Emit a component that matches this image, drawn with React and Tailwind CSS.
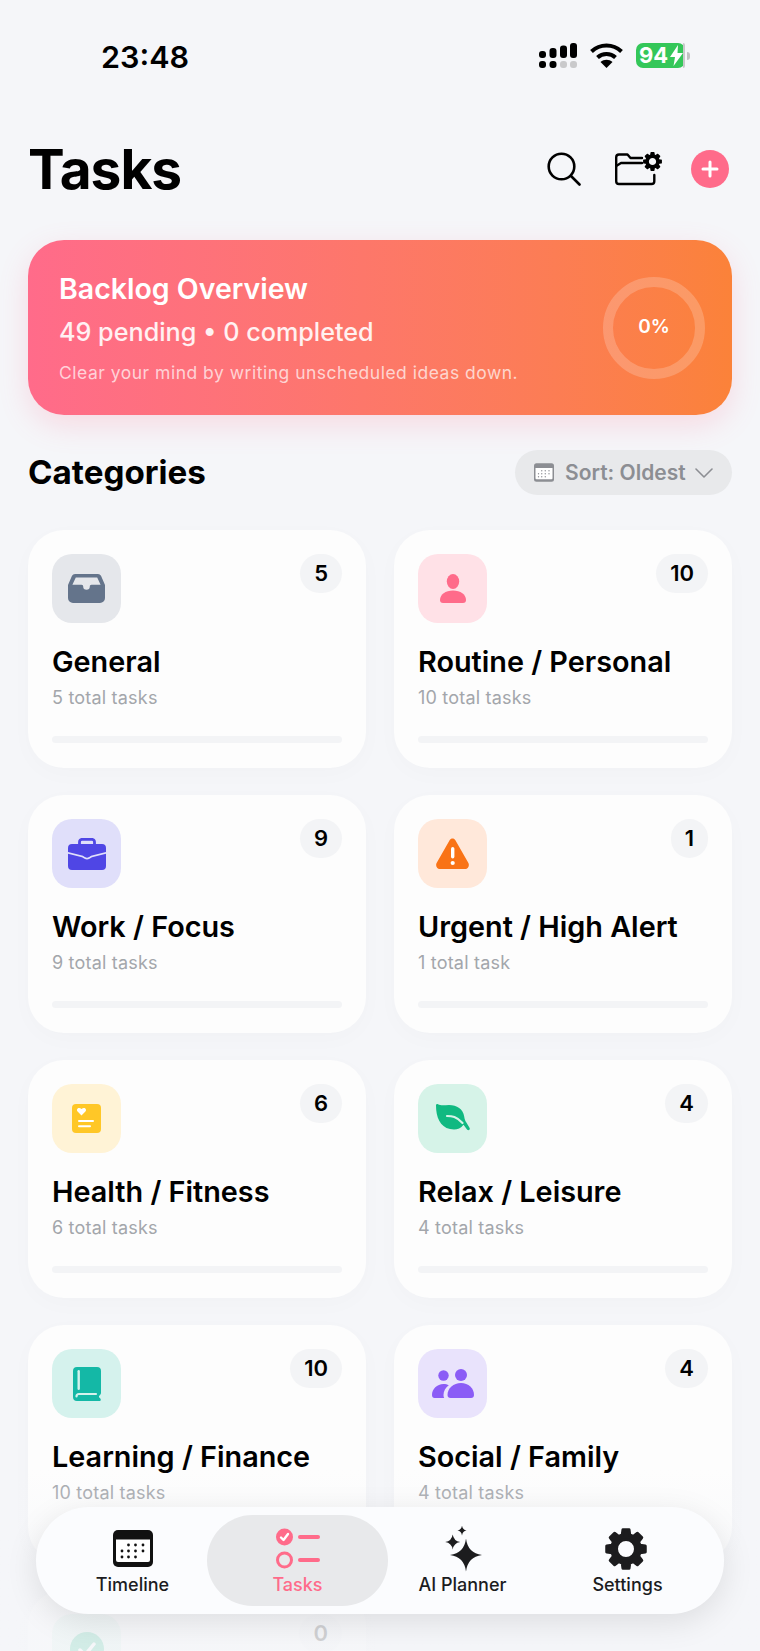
const InboxIcon = () => (
  <svg width="37" height="29" viewBox="0 0 37 29">
    <path fillRule="evenodd" fill="#64748b" d="M7 0H30a3.5 3.5 0 0 1 3 1.8L37 11V24a5 5 0 0 1-5 5H5a5 5 0 0 1-5-5V11L4 1.8A3.5 3.5 0 0 1 7 0ZM7.8 3.4 4.4 10.800H13.500c1.200 0 1.700.7 1.700 1.700a3.300 3.300 0 0 0 6.600 0c0-1 .5-1.700 1.700-1.700H32.600L29.200 3.400Z" />
  </svg>
);

const PersonIcon = () => (
  <svg width="26" height="29" viewBox="0 0 26 29">
    <ellipse cx="13" cy="7.5" rx="6.2" ry="7.5" fill="#ff6b8a" />
    <path fill="#ff6b8a" d="M0 26c0-5.500 5.500-9.500 13-9.500S26 20.500 26 26c0 2-1 3-3 3H3c-2 0-3-1-3-3Z" />
  </svg>
);

const BriefcaseIcon = () => (
  <svg width="38" height="32" viewBox="0 0 38 32">
    <path fill="none" stroke="#4f46e5" strokeWidth="2.800" d="M11.500 7V4a2.700 2.700 0 0 1 2.700-2.700h9.600A2.700 2.700 0 0 1 26.500 4V7" />
    <path fill="#4f46e5" d="M4 6h30a4 4 0 0 1 4 4v4L24 17.500c-1.500.4-2 1-3 1.600-1.200.7-2.800.7-4 0-1-.6-1.500-1.200-3-1.600L0 14V10a4 4 0 0 1 4-4Z" />
    <path fill="#4f46e5" d="M0 15.800 14 19.300c1 .3 1.500.9 2.500 1.500 1.500.9 3.500.9 5 0 1-.6 1.500-1.200 2.500-1.500L38 15.800V28a4 4 0 0 1-4 4H4a4 4 0 0 1-4-4Z" />
  </svg>
);

const WarningIcon = () => (
  <svg width="33" height="31" viewBox="0 0 33 31">
    <path fill="#f97316" d="M13.600 2.200c1.300-2.300 4.500-2.300 5.800 0l13 22.800c1.300 2.500-.3 6-3 6H3.600c-2.700 0-4.300-3.500-3-6Z" />
    <rect x="15" y="9" width="3.400" height="11.500" rx="1.700" fill="#fff" />
    <circle cx="16.700" cy="25" r="2.100" fill="#fff" />
  </svg>
);

const HealthIcon = () => (
  <svg width="29" height="29" viewBox="0 0 29 29">
    <rect width="29" height="29" rx="4" fill="#ffc727" />
    <path fill="#fff" d="M9.500 11.500 5.600 7.600c-1.900-2.200.9-5 3.900-2.600 3-2.400 5.800.4 3.900 2.600Z" />
    <rect x="6" y="16" width="16" height="2" rx="1" fill="#fff" />
    <rect x="6" y="21.200" width="13" height="2" rx="1" fill="#fff" />
  </svg>
);

const LeafIcon = () => (
  <svg width="34" height="29" viewBox="0 0 34 29">
    <path fill="#10b981" d="M0 1.500C0 .3 1-.3 2 .3 5 2 9 1 13 1c8 0 14 4 15.200 11.500.3 2.500 1 4.500 2 5.800l3.300 5.500c1.200 2-1.200 3.400-2.500 1.700l-3.500-4.800C24 25.500 19 26 14 25 4 23 0 13 0 1.500Z" />
    <path fill="none" stroke="#d6f3e8" strokeWidth="2.200" strokeLinecap="round" d="M11 12c5 0 9.500 .5 15.500 7" />
  </svg>
);

const BookIcon = () => (
  <svg width="28" height="34" viewBox="0 0 28 34">
    <path fill="#14b8a6" d="M4 0h20a4 4 0 0 1 4 4v22c0 1.200-1 1.800-1.500 2.400-.8 1-.8 1.700 0 2.400l1 1c.6.800.2 2.200-1.200 2.200H4a4 4 0 0 1-4-4V4a4 4 0 0 1 4-4Z" />
    <rect x="4.500" y="3" width="2.400" height="20" rx="1.200" fill="#d5f2ed" />
    <path fill="none" stroke="#d5f2ed" strokeWidth="2.200" strokeLinecap="round" d="M23 27H6a2.500 2.500 0 0 0-2.500 2.500" />
  </svg>
);

const PeopleIcon = () => (
  <svg width="42" height="29" viewBox="0 0 42 29">
    <circle cx="11.500" cy="6.500" r="5.200" fill="#8b5cf6" />
    <circle cx="29" cy="6" r="6" fill="#8b5cf6" />
    <path fill="#8b5cf6" d="M0 26c0-6 5-11 11.500-11 2 0 3.800.5 5.300 1.200C13.500 18.500 11.500 22 11.500 26c0 1.200.2 2.200.7 3H2.500C1 29 0 27.800 0 26Z" />
    <path fill="#8b5cf6" d="M15.500 26c0-7 6-12 13.500-12s13 5 13 12c0 1.800-1.200 3-3 3H18.500c-1.800 0-3-1.200-3-3Z" />
  </svg>
);

const CheckIcon = () => (
  <svg width="34" height="34" viewBox="0 0 34 34">
    <circle cx="17" cy="17" r="17" fill="#10b981" />
    <path fill="none" stroke="#fff" strokeWidth="3.500" strokeLinecap="round" strokeLinejoin="round" d="M10 18l5 5 9-11" />
  </svg>
);

const calendarDots = [
  [15.5, 15], [22.5, 15], [30, 15],
  [9, 21], [15.5, 21], [22.5, 21], [30, 21],
  [9, 27], [15.5, 27], [22.5, 27],
];

const CalendarIcon = ({ className, dark }) => (
  <svg className={className} viewBox="0 0 40 37">
    <rect width="40" height="37" rx="5" fill={dark} />
    <path fill="#fff" d="M3 9.500H37V30a2 2 0 0 1-2 2H5a2 2 0 0 1-2-2Z" />
    {calendarDots.map(([x, y]) => (
      <circle key={`${x}-${y}`} cx={x} cy={y} r="1.400" fill={dark} />
    ))}
  </svg>
);

const ChecklistIcon = () => (
  <svg width="44" height="42" viewBox="0 0 44 42">
    <circle cx="8.500" cy="9" r="8.500" fill="#ff6b8a" />
    <path fill="none" stroke="#fff" strokeWidth="2.400" strokeLinecap="round" strokeLinejoin="round" d="M5 9.500l2.500 2.500L12 6" />
    <rect x="22" y="7" width="22" height="4" rx="2" fill="#ff6b8a" />
    <circle cx="8.500" cy="32" r="7" fill="none" stroke="#ff6b8a" strokeWidth="3" />
    <rect x="22" y="30" width="22" height="4" rx="2" fill="#ff6b8a" />
  </svg>
);

const star = (cx, cy, rx, ry, k) =>
  `M${cx} ${cy - ry}Q${cx + k} ${cy - k} ${cx + rx} ${cy}Q${cx + k} ${cy + k} ${cx} ${cy + ry}Q${cx - k} ${cy + k} ${cx - rx} ${cy}Q${cx - k} ${cy - k} ${cx} ${cy - ry}Z`;

const SparklesIcon = () => (
  <svg width="38" height="46" viewBox="0 0 38 46">
    <path fill="#1c1c1e" d={star(22, 29, 16, 16.500, 1.800)} />
    <path fill="#1c1c1e" d={star(8.700, 16, 7.500, 7.500, 1)} />
    <path fill="#1c1c1e" d={star(18, 4.500, 4.500, 5, 0.600)} />
  </svg>
);

// eight round teeth around a hole, the stroke rounds off the corners
const gearPath = () => {
  const pt = (deg, r) => {
    const a = ((deg - 90) * Math.PI) / 180;
    return `${(21 + r * Math.cos(a)).toFixed(2)} ${(21 + r * Math.sin(a)).toFixed(2)}`;
  };
  const pts = [];
  for (let i = 0; i < 8; i++) {
    const a = i * 45;
    pts.push(pt(a - 15, 14.5), pt(a - 9, 19.5), pt(a + 9, 19.5), pt(a + 15, 14.5));
  }
  return `M${pts.join('L')}ZM30.500 21a9.500 9.500 0 1 0-19 0a9.500 9.500 0 1 0 19 0Z`;
};

const GearIcon = ({ size, className }) => (
  <svg width={size} height={size} viewBox="0 0 42 42" className={className}>
    <path d={gearPath()} fill="currentColor" fillRule="evenodd" stroke="currentColor" strokeWidth="3" strokeLinejoin="round" />
  </svg>
);

const SearchIcon = () => (
  <svg width="34" height="34" viewBox="0 0 34 34" fill="none" stroke="#000" strokeWidth="2.600" strokeLinecap="round">
    <circle cx="14.500" cy="14.500" r="12.800" />
    <path d="M24 24l8.500 8.500" />
  </svg>
);

const FolderGearIcon = () => (
  <div className="relative w-[47px] h-[34px]">
    <svg width="47" height="34" viewBox="0 0 47 34" fill="none" stroke="#000" strokeWidth="2.400" strokeLinecap="round" strokeLinejoin="round">
      <path d="M27 6H15.500L12.500 2.500H4a2.800 2.800 0 0 0-2.800 2.800V29.200A2.800 2.800 0 0 0 4 32H36.500a2.800 2.800 0 0 0 2.800-2.800V23" />
      <path d="M2 13.500 6 11H27" />
    </svg>
    <GearIcon size={19} className="absolute right-0 top-0 text-black" />
  </div>
);

const SignalIcon = () => (
  <svg width="38" height="25" viewBox="0 0 38 25">
    <rect x="0" y="8" width="7" height="7" rx="3" fill="#000" />
    <rect x="10.500" y="5" width="7" height="10" rx="3" fill="#000" />
    <rect x="21" y="2.500" width="7" height="12.500" rx="3" fill="#000" />
    <rect x="31" y="0" width="7" height="15" rx="3" fill="#000" />
    <rect x="0" y="18" width="7" height="7" rx="3" fill="#000" />
    <rect x="10.500" y="18" width="7" height="7" rx="3" fill="#000" />
    <rect x="21" y="18" width="7" height="7" rx="3" fill="#c9c9cb" />
    <rect x="31" y="18" width="7" height="7" rx="3" fill="#c9c9cb" />
  </svg>
);

const WifiIcon = () => (
  <svg width="33" height="25" viewBox="0 0 33 25" fill="none" stroke="#000" strokeWidth="4">
    <path d="M1.500 8.500C10 .5 23 .5 31.500 8.500" />
    <path d="M7.500 14.500C12.500 9.800 20.500 9.800 25.500 14.500" />
    <path fill="#000" stroke="none" d="M10.500 19c3.500-3 8.500-3 12 0l-6 6Z" />
  </svg>
);

const Battery = () => (
  <div className="flex items-center gap-[2px]">
    <div className="relative w-[49px] h-[25px] rounded-[7px] bg-[#34c759] flex items-center pl-[3px]">
      <span className="text-white text-[22px] font-bold leading-[25px]">94</span>
      <svg width="13" height="21" viewBox="0 0 13 21" className="ml-[2px]">
        <path fill="#fff" d="M8 0 0 12h5l-1.500 9L13 8H7.500Z" />
      </svg>
      <div className="absolute right-0 top-0 bottom-0 w-[2px] rounded-r-[7px] bg-[#c9c9cb]" />
    </div>
    <div className="w-[3px] h-[8px] rounded-r-full bg-[#c0c0c2]" />
  </div>
);

const categories = [
  { name: 'General', count: 5, sub: '5 total tasks', bg: 'bg-[#e5e7eb]', icon: <InboxIcon /> },
  { name: 'Routine / Personal', count: 10, sub: '10 total tasks', bg: 'bg-[#ffe1e7]', icon: <PersonIcon /> },
  { name: 'Work / Focus', count: 9, sub: '9 total tasks', bg: 'bg-[#e0dffa]', icon: <BriefcaseIcon /> },
  { name: 'Urgent / High Alert', count: 1, sub: '1 total task', bg: 'bg-[#ffe8da]', icon: <WarningIcon /> },
  { name: 'Health / Fitness', count: 6, sub: '6 total tasks', bg: 'bg-[#fff3d6]', icon: <HealthIcon /> },
  { name: 'Relax / Leisure', count: 4, sub: '4 total tasks', bg: 'bg-[#d6f3e8]', icon: <LeafIcon /> },
  { name: 'Learning / Finance', count: 10, sub: '10 total tasks', bg: 'bg-[#d5f2ed]', icon: <BookIcon /> },
  { name: 'Social / Family', count: 4, sub: '4 total tasks', bg: 'bg-[#e9e3fc]', icon: <PeopleIcon /> },
  { count: 0, bg: 'bg-[#d6f3e8]', icon: <CheckIcon /> },
];

const CategoryCard = ({ cat }) => (
  <div className="h-[238px] rounded-[36px] bg-[#fdfdfd] shadow-[0_6px_24px_rgba(0,0,0,0.02)] p-6 flex flex-col">
    <div className="flex items-start justify-between">
      <div className={`w-[69px] h-[69px] rounded-[20px] flex items-center justify-center ${cat.bg}`}>{cat.icon}</div>
      <div className="h-[39px] px-[14px] rounded-full bg-[#f3f4f6] flex items-center justify-center text-[22px] font-semibold text-black">
        {cat.count}
      </div>
    </div>
    {cat.name && (
      <>
        <div className="mt-[21px] text-[28.800px] leading-[36px] font-semibold text-black whitespace-nowrap">{cat.name}</div>
        <div className="mt-[6px] text-[18px] leading-[24px] tracking-[0.2px] text-[#a3a6ab]">{cat.sub}</div>
      </>
    )}
    <div className="mt-auto mb-[1px] h-[7px] rounded-full bg-[#f3f4f6]" />
  </div>
);

const NavItem = ({ icon, label, active }) => (
  <div className={`flex flex-col items-center justify-center rounded-[46px] ${active ? '-mx-[8px] bg-[#e8e9eb]' : ''}`}>
    <div className="mt-[2px] h-[46px] flex items-center justify-center">{icon}</div>
    <div className={`mt-[2px] mb-[2px] text-[18px] leading-[22px] font-medium ${active ? 'text-[#ff6b8a]' : 'text-[#1c1c1e]'}`}>{label}</div>
  </div>
);

export default function App() {
  return (
    <div className="relative w-[760px] h-[1651px] overflow-hidden bg-[#f5f6f9] font-['Inter',sans-serif]">
      <div className="h-[86px] pl-[101px] pr-[70px] pt-[43px] flex justify-between items-start">
        <div className="text-[30.500px] leading-[28px] font-semibold text-black">23:48</div>
        <div className="flex items-start gap-[13px]">
          <SignalIcon />
          <WifiIcon />
          <Battery />
        </div>
      </div>

      <div className="mt-[51px] mx-7 flex items-center justify-between">
        <h1 className="text-[55px] leading-[64px] font-bold text-black tracking-[-1px]">Tasks</h1>
        <div className="flex items-center">
          <SearchIcon />
          <div className="ml-[34px]"><FolderGearIcon /></div>
          <div className="ml-[29px] mr-[3px] w-[38px] h-[38px] rounded-full bg-[#ff6b8a] flex items-center justify-center">
            <svg width="18" height="18" viewBox="0 0 18 18" stroke="#fff" strokeWidth="3" strokeLinecap="round">
              <path d="M9 2v14M2 9h14" />
            </svg>
          </div>
        </div>
      </div>

      <div className="mt-[39px] mx-7 h-[175px] rounded-[36px] bg-gradient-to-r from-[#ff6b8a] to-[#fb8239] shadow-[0_10px_30px_rgba(255,107,138,0.2)] pl-[31px] pr-[27px] flex items-center justify-between">
        <div className="text-white">
          <div className="text-[28.500px] leading-[34px] font-semibold">Backlog Overview</div>
          <div className="mt-[9px] text-[25.200px] leading-[34px] font-medium text-white/90">49 pending • 0 completed</div>
          <div className="mt-[12px] -mb-[2px] text-[17.500px] leading-[24px] tracking-[0.5px] text-white/70">Clear your mind by writing unscheduled ideas down.</div>
        </div>
        <div className="w-[102px] h-[102px] rounded-full border-[10px] border-white/20 flex items-center justify-center text-white text-[19px] font-semibold shrink-0">
          0%
        </div>
      </div>

      <div className="mt-[35px] mx-7 flex items-center justify-between">
        <div className="text-[33.200px] leading-[45px] font-bold text-black">Categories</div>
        <div className="w-[217px] h-[45px] rounded-full bg-[#e8e9eb] flex items-center pl-[19px] text-[#8c8e93]">
          <CalendarIcon className="w-[20px] h-[19px]" dark="#8c8e93" />
          <span className="ml-[11px] text-[21px] font-semibold">Sort: Oldest</span>
          <svg width="18" height="10" viewBox="0 0 18 10" fill="none" stroke="#8c8e93" strokeWidth="1.600" strokeLinecap="round" strokeLinejoin="round" className="ml-[9px]">
            <path d="M1 1l8 8 8-8" />
          </svg>
        </div>
      </div>

      <div className="mt-[35px] mx-7 grid grid-cols-2 gap-x-7 gap-y-[27px]">
        {categories.map((cat, index) => (
          <CategoryCard key={index} cat={cat} />
        ))}
      </div>

      {/* fade under the floating tab bar */}
      <div className="absolute left-0 right-0 top-[1470px] bottom-0 bg-gradient-to-b from-[#f5f6f9]/0 to-[#f5f6f9]/85 to-80%" />

      <div className="absolute left-[36px] top-[1507px] w-[688px] h-[107px] rounded-[53px] bg-[#fbfcfe] shadow-[0_8px_32px_rgba(0,0,0,0.1)] px-[14px] py-[8px] grid grid-cols-4">
        <NavItem icon={<CalendarIcon className="w-[40px] h-[37px]" dark="#111" />} label="Timeline" />
        <NavItem icon={<ChecklistIcon />} label="Tasks" active />
        <NavItem icon={<SparklesIcon />} label="AI Planner" />
        <NavItem icon={<GearIcon size={42} className="text-[#1c1c1e] -ml-[4px]" />} label="Settings" />
      </div>
    </div>
  );
}
